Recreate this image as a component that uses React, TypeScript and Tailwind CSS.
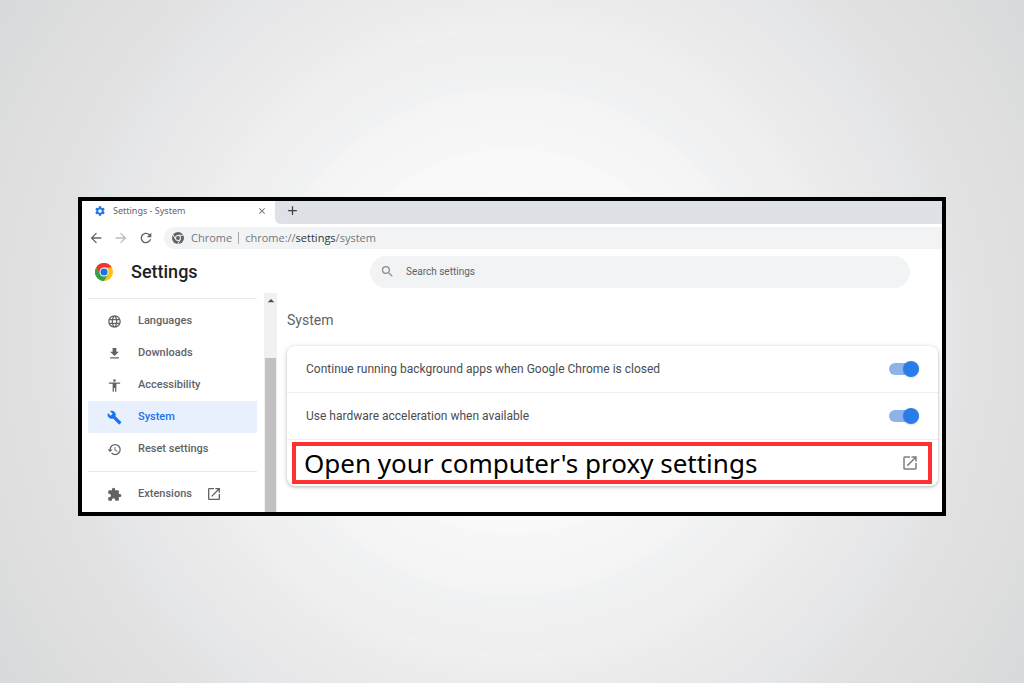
import type { ReactNode } from "react";
import type { IconType } from "react-icons";
import {
  MdAccessibility,
  MdAdd,
  MdArrowBack,
  MdArrowDropUp,
  MdArrowForward,
  MdBuild,
  MdClose,
  MdExtension,
  MdFileDownload,
  MdLanguage,
  MdOpenInNew,
  MdRefresh,
  MdRestore,
  MdSearch,
  MdSettings,
} from "react-icons/md";

export default function App() {
  return (
    <div className="flex min-h-screen flex-col bg-[radial-gradient(circle_at_50%_50%,#fcfcfc_0,#f9f9f9_191px,#f7f7f7_194px,#f4f4f4_252px,#f1f2f3_256px,#efefef_308px,#eeeeee_310px,#f0f0f0_312px,#ececec_340px,#e9e9ea_380px,#e5e6e8_430px,#e2e2e3_460px,#dfdfdf_520px,#d8dadb_600px)] px-[78px] pt-[197px] pb-20 font-['Roboto',sans-serif] text-[#5f6368]">
      <div className="overflow-hidden border-4 border-black bg-white">
        <TabStrip />
        <Toolbar />
        <Header />
        <div className="flex">
          <Sidebar />
          <Scrollbar />
          <SystemPage />
        </div>
      </div>
    </div>
  );
}

const TabStrip = () => {
  return (
    <div className="flex h-[23px] bg-white font-['Noto_Sans',sans-serif]">
      <div className="flex w-[193px] items-center pr-2 pb-1 pl-3">
        <MdSettings className="size-3 text-[#1a73e8]" />
        <span className="ml-[7px] flex-1 text-[9px] leading-4">
          Settings - System
        </span>
        <button aria-label="Close tab">
          <MdClose className="size-[10px]" stroke="currentColor" />
        </button>
      </div>
      <div className="flex flex-1 items-center rounded-bl-md bg-[#dee1e6] pb-1 pl-[10px]">
        <button aria-label="New tab" className="text-[#3c4043]">
          <MdAdd className="size-[15px]" stroke="currentColor" />
        </button>
      </div>
    </div>
  );
};

const Toolbar = () => {
  return (
    <div className="flex h-7 items-center pl-[6px] font-['Open_Sans','Noto_Sans',sans-serif]">
      <div className="flex w-[76px] gap-[9px]">
        <button aria-label="Back">
          <MdArrowBack className="size-4" stroke="currentColor" />
        </button>
        <button aria-label="Forward" className="text-[#babcbe]">
          <MdArrowForward className="size-4" stroke="currentColor" />
        </button>
        <button aria-label="Reload">
          <MdRefresh className="size-4" stroke="currentColor" />
        </button>
      </div>
      <div className="flex h-[22px] flex-1 items-center rounded-l-full bg-[#f1f3f4] pl-2 text-[11px] leading-4 text-[#74787c]">
        <ChromeMark className="size-3" />
        <span className="ml-[7px]">Chrome</span>
        <span className="mx-[6px] h-3 w-px bg-[#a5a8ab]" />
        <span>
          chrome://<span className="text-[#303336]">settings</span>/system
        </span>
      </div>
    </div>
  );
};

const Header = () => {
  return (
    <header className="flex h-[41px] items-center pr-8 pb-[2px] pl-[13px]">
      <ChromeLogo className="size-[18px]" />
      <h1 className="ml-[18px] w-[239px] text-lg leading-6 font-medium text-[#202124]">
        Settings
      </h1>
      <label className="flex h-8 flex-1 items-center rounded-full bg-[#f1f3f4] pl-[10px]">
        <MdSearch className="size-[15px] text-[#8a8d91]" />
        <input
          type="text"
          aria-label="Search settings"
          placeholder="Search settings"
          className="ml-[11px] flex-1 bg-transparent text-[10px] leading-4 outline-none placeholder:text-[#5f6368]"
        />
      </label>
    </header>
  );
};

const Sidebar = () => {
  const items = [
    { title: "Languages", icon: MdLanguage },
    { title: "Downloads", icon: MdFileDownload },
    { title: "Accessibility", icon: MdAccessibility },
    { title: "System", icon: MdBuild, active: true },
    { title: "Reset settings", icon: MdRestore },
  ];

  return (
    <nav className="w-[182px] pt-[5px] pr-[7px] pl-[6px]">
      <div className="border-y border-[#e8eaed] pt-[6px] pb-[6px]">
        {items.map((item) => (
          <NavItem key={item.title} {...item} />
        ))}
      </div>
      <div className="pt-[6px]">
        <NavItem title="Extensions" icon={MdExtension} external />
      </div>
    </nav>
  );
};

const NavItem = ({
  title,
  icon: Icon,
  active,
  external,
}: {
  title: string;
  icon: IconType;
  active?: boolean;
  external?: boolean;
}) => {
  return (
    <a
      href="#"
      className={
        active
          ? "flex h-8 items-center bg-[#e8f0fe] pl-[19px] text-[#1a73e8]"
          : "flex h-8 items-center pl-[19px]"
      }
    >
      <Icon className="size-[15px]" />
      <span className="ml-4 text-[11px] leading-4 font-medium">{title}</span>
      {external && <MdOpenInNew className="ml-[14px] size-4" />}
    </a>
  );
};

const Scrollbar = () => {
  return (
    <div className="flex w-[13px] flex-col items-center bg-[#f1f1f1]">
      <MdArrowDropUp className="h-4 w-4 text-[#505050]" />
      <div className="mt-[49px] w-[11px] flex-1 bg-[#c1c1c1]" />
    </div>
  );
};

const SystemPage = () => {
  return (
    <main className="flex-1 pt-[17px] pr-1 pb-[26px] pl-[10px]">
      <h2 className="text-sm leading-5">System</h2>
      <div className="mt-4 rounded-lg bg-white shadow-[0_1px_3px_rgba(60,64,67,0.3),0_1px_6px_rgba(60,64,67,0.12)]">
        <ToggleRow>
          Continue running background apps when Google Chrome is closed
        </ToggleRow>
        <ToggleRow>Use hardware acceleration when available</ToggleRow>
        <div className="pt-[2px] pr-[6px] pb-[2px] pl-[5px]">
          <a
            href="#"
            className="flex h-[42px] items-center justify-between border-4 border-[#ff3131] bg-white pr-[9px] pl-2 font-['Noto_Sans',sans-serif] text-[26px] leading-8 text-black"
          >
            Open your computer's proxy settings
            <MdOpenInNew className="size-[18px] text-[#7d8084]" />
          </a>
        </div>
      </div>
    </main>
  );
};

const ToggleRow = ({ children }: { children: ReactNode }) => {
  return (
    <label className="flex h-[47px] items-center justify-between border-b border-[#eceeef] pr-[19px] pl-[19px] text-xs leading-4 text-[#4a4d51]">
      {children}
      <input
        type="checkbox"
        role="switch"
        defaultChecked
        className="relative h-4 w-[30px] appearance-none before:absolute before:inset-x-0 before:top-[2px] before:h-3 before:rounded-full before:bg-[#8db3ea] after:absolute after:top-0 after:left-0 after:size-4 after:rounded-full after:bg-white after:shadow checked:after:left-[14px] checked:after:bg-[#2a7de9]"
      />
    </label>
  );
};

const ChromeLogo = ({ className }: { className: string }) => {
  return (
    <svg viewBox="0 0 48 48" className={className} aria-hidden="true">
      <circle cx="24" cy="24" r="24" fill="#fbc116" />
      <path d="M13.6 30 3.2 12A24 24 0 0 0 24 48l10.4-18Z" fill="#34a04e" />
      <path d="M3.2 12A24 24 0 0 1 44.8 12H24L13.6 30Z" fill="#f0342b" />
      <circle cx="24" cy="24" r="12" fill="#fff" />
      <circle cx="24" cy="24" r="9.5" fill="#1a73e8" />
    </svg>
  );
};

const ChromeMark = ({ className }: { className: string }) => {
  return (
    <svg viewBox="0 0 48 48" className={className} aria-hidden="true">
      <circle cx="24" cy="24" r="24" fill="#5f6368" />
      <path
        d="M24 13h21M14.5 29.5 4 11.3M33.5 29.5 23 47.7"
        stroke="#f1f3f4"
        strokeWidth="4"
      />
      <circle cx="24" cy="24" r="12" fill="#f1f3f4" />
      <circle cx="24" cy="24" r="8" fill="#5f6368" />
    </svg>
  );
};
